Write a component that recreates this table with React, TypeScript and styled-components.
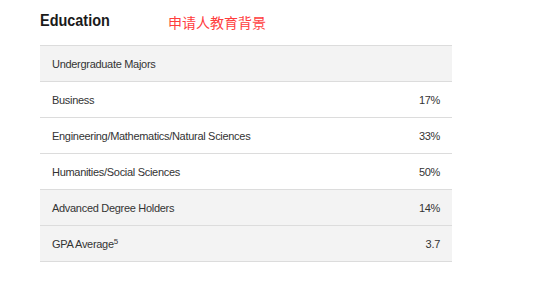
import React from "react";
import styled, { createGlobalStyle } from "styled-components";

const GlobalStyle = createGlobalStyle`
  html, body {
    margin: 0;
    padding: 0;
    background: #ffffff;
  }
  body {
    font-family: "Liberation Sans", Arial, sans-serif;
  }
`;

type Row = { label: string; value: string; sup?: string; shaded?: boolean };

const rows: Row[] = [
  { label: "Business", value: "17%" },
  { label: "Engineering/Mathematics/Natural Sciences", value: "33%" },
  { label: "Humanities/Social Sciences", value: "50%" },
  { label: "Advanced Degree Holders", value: "14%", shaded: true },
  { label: "GPA Average", sup: "5", value: "3.7", shaded: true },
];

const App: React.FC = () => {
  return (
    <>
      <GlobalStyle />
      <Page>
        <Header>
          <TitleBox>
            <Title>Education</Title>
          </TitleBox>
          <Note>申请人教育背景</Note>
        </Header>
        <Table>
          <Line $shaded>
            <Label>Undergraduate Majors</Label>
          </Line>
          {rows.map((r) => (
            <Line key={r.label} $shaded={r.shaded}>
              <Label>
                {r.label}
                {r.sup && <Sup>{r.sup}</Sup>}
              </Label>
              <Value>{r.value}</Value>
            </Line>
          ))}
        </Table>
      </Page>
    </>
  );
};

export default App;

const Page = styled.div`
  width: 554px;
  height: 282px;
  padding: 0 0 0 40px;
  box-sizing: border-box;
`;

const Header = styled.div`
  height: 45px;
  display: flex;
  align-items: flex-start;
  padding-top: 10px;
  box-sizing: border-box;
`;

const TitleBox = styled.div`
  width: 128px;
`;

const Title = styled.h2`
  display: inline-block;
  margin: 0;
  font-size: 17px;
  font-weight: bold;
  color: #1a1a1a;
  line-height: 22px;
  transform: scaleX(0.85);
  transform-origin: left center;
`;

const Note = styled.span`
  font-family: "Noto Sans CJK SC", sans-serif;
  font-size: 14px;
  line-height: 24px;
  color: #ff3d3d;
`;

const Table = styled.div`
  width: 412px;
  border-top: 1px solid #dcdcdc;
`;

const Line = styled.div<{ $shaded?: boolean }>`
  height: 35px;
  display: flex;
  align-items: center;
  justify-content: space-between;
  padding: 0 12px;
  background: ${(p) => (p.$shaded ? "#f3f3f3" : "#ffffff")};
  border-bottom: 1px solid #dcdcdc;
  font-size: 11px;
  letter-spacing: -0.3px;
  color: #333333;
`;

const Label = styled.span``;

const Value = styled.span``;

const Sup = styled.span`
  font-size: 8px;
  vertical-align: 4px;
  line-height: 0;
`;
